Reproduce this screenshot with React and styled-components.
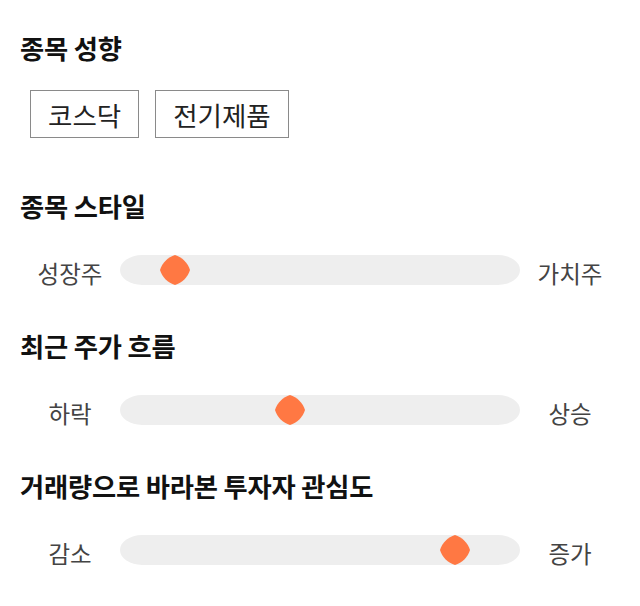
import React from 'react';
import styled, { createGlobalStyle } from 'styled-components';

const GlobalStyle = createGlobalStyle`
    body {
        margin: 0;
        background: #ffffff;
        font-family: 'Noto Sans CJK KR', 'Noto Sans', sans-serif;
    }
`;

const Page = styled.div`
    width: 640px;
    padding: 30px 20px 0 20px;
    box-sizing: border-box;
    display: flex;
    flex-direction: column;
`;

const Section = styled.section`
    display: flex;
    flex-direction: column;
    margin-bottom: ${(p) => p.gap || 0}px;
`;

const Title = styled.h2`
    margin: 0;
    font-size: 26.3px;
    line-height: 36px;
    font-weight: 700;
    color: #111111;
    letter-spacing: -0.2px;
`;

const Chips = styled.div`
    display: flex;
    gap: 16px;
    padding-left: 10px;
    margin-top: 24px;
`;

const Chip = styled.button`
    font-family: inherit;
    font-size: 26.5px;
    color: #222222;
    background: #ffffff;
    border: 1px solid #8a8a8a;
    border-radius: 0;
    height: 48px;
    padding: 0 17px;
    cursor: pointer;
`;

const SliderRow = styled.div`
    display: grid;
    grid-template-columns: 100px 400px 100px;
    align-items: center;
    margin-top: 28px;
`;

const Label = styled.span`
    text-align: center;
    font-size: 23.5px;
    color: #444444;
    line-height: 30px;
    padding-top: 6px;
`;

const Track = styled.div`
    position: relative;
    height: 30px;
    background: #eeeeee;
    border-radius: 22px / 15px;
`;

const Thumb = styled.svg`
    position: absolute;
    top: 0;
    width: 30px;
    height: 30px;
`;

const sections = [
    { title: '종목 스타일', left: '성장주', right: '가치주', value: 0.108 },
    { title: '최근 주가 흐름', left: '하락', right: '상승', value: 0.419 },
    { title: '거래량으로 바라본 투자자 관심도', left: '감소', right: '증가', value: 0.865 },
];

function Slider({ left, right, value }) {
    return (
        <SliderRow>
            <Label>{left}</Label>
            <Track>
                <Thumb viewBox='0 0 30 30' style={{ left: `${value * 370}px` }}>
                    <path
                        d='M15 0 C22 2 28 8 30 15 C28 22 22 28 15 30 C8 28 2 22 0 15 C2 8 8 2 15 0 Z'
                        fill='#ff7843'
                    />
                </Thumb>
            </Track>
            <Label>{right}</Label>
        </SliderRow>
    );
}

export default function App() {
    return (
        <>
            <GlobalStyle />
            <Page>
                <Section gap={50}>
                    <Title>종목 성향</Title>
                    <Chips>
                        <Chip>코스닥</Chip>
                        <Chip>전기제품</Chip>
                    </Chips>
                </Section>
                {sections.map((s) => (
                    <Section key={s.title} gap={40}>
                        <Title>{s.title}</Title>
                        <Slider left={s.left} right={s.right} value={s.value} />
                    </Section>
                ))}
            </Page>
        </>
    );
}
